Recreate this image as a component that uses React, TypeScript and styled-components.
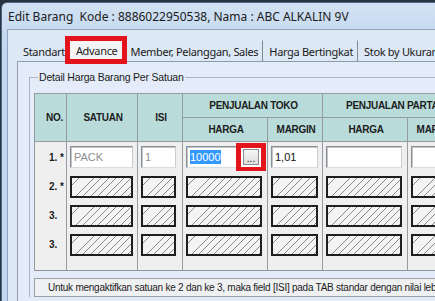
import React from "react";
import styled, { createGlobalStyle } from "styled-components";

const Global = createGlobalStyle`
  html, body { margin: 0; padding: 0; }
  body {
    width: 435px;
    height: 301px;
    overflow: hidden;
    background: #27323f;
    font-family: "Liberation Sans", Arial, sans-serif;
  }
`;

const Window = styled.div`
  margin: 2px 0 0 1px;
  width: 480px;
  height: 320px;
  border: 1px solid #4d6684;
  border-radius: 6px 6px 0 0;
  background: linear-gradient(#d2e2f4, #c3d7ee 40px);
  display: flex;
  flex-direction: column;
`;

const TitleBar = styled.div`
  height: 26px;
  display: flex;
  align-items: center;
  padding-left: 6px;
  font: 12px "Noto Sans", "Liberation Sans", sans-serif;
  color: #1b1b1b;
  white-space: pre;
`;

const Client = styled.div`
  flex: 1;
  margin-left: 5px;
  border: 1px solid #8ea6c4;
  border-right: none;
  border-bottom: none;
  background: #dde8f5;
  padding: 8px 0 0 9px;
  display: flex;
  flex-direction: column;
`;

const TabRow = styled.div`
  display: flex;
  align-items: flex-end;
  height: 23px;
  position: relative;
  z-index: 1;
`;

const Tab = styled.div<{ $active?: boolean }>`
  position: relative;
  height: ${(p) => (p.$active ? "23px" : "20px")};
  margin: 0 0 ${(p) => (p.$active ? "-1px" : "0")} ${(p) => (p.$active ? "-1px" : "0")};
  padding: ${(p) => (p.$active ? "0 6px 0 6px" : "0 4px 0 5px")};
  display: flex;
  align-items: center;
  font: 11px "Noto Sans", "Liberation Sans", sans-serif;
  letter-spacing: -0.32px;
  color: #1b1b1b;
  white-space: nowrap;
  background: ${(p) => (p.$active ? "#f4f4f4" : "transparent")};
  border-left: 1px solid ${(p) => (p.$active ? "#8b97a6" : "transparent")};
  border-right: 1px solid #7f8a96;
  border-top: 1px solid ${(p) => (p.$active ? "#8b97a6" : "transparent")};
`;

const Highlight = styled.span<{ $t: number; $r: number; $b: number; $l: number }>`
  position: absolute;
  top: ${(p) => p.$t}px;
  right: ${(p) => p.$r}px;
  bottom: ${(p) => p.$b}px;
  left: ${(p) => p.$l}px;
  border: 5px solid #e3141c;
  pointer-events: none;
  z-index: 5;
`;

const TabPage = styled.div`
  flex: 1;
  border-top: 1px solid #8e9bab;
  border-left: 1px solid #8e9bab;
  background: #e3ecf8;
  padding: 9px 0 0 11px;
`;

const GroupBox = styled.fieldset`
  margin: 0;
  padding: 10px 0 0 4px;
  border: 1px solid #a9b5c4;
  border-right: none;
  border-bottom: none;
  min-width: 0;
`;

const Legend = styled.legend`
  padding: 0 1px;
  margin-left: 4px;
  font: 10.5px "Liberation Sans", Arial, sans-serif;
  letter-spacing: -0.2px;
  color: #1b1b1b;
`;

const Grid = styled.table`
  border-collapse: collapse;
  table-layout: fixed;
  width: 428px;
  border: 1px solid #8f959b;
`;

const HeadCell = styled.th<{ $pl?: number }>`
  height: 23px;
  padding: 0 0 0 ${(p) => p.$pl ?? 2}px;
  background: #b9dcdb;
  border: 1px solid #969b9f;
  font: bold 10px "Liberation Sans", Arial, sans-serif;
  letter-spacing: -0.3px;
  color: #1c1c1c;
  text-align: center;
  vertical-align: middle;
  white-space: nowrap;
  overflow: hidden;
`;

const BodyCell = styled.td`
  background: #efefef;
  border-left: 1px solid #969b9f;
  border-right: 1px solid #969b9f;
  padding: 5px 0 2px 3px;
  vertical-align: top;
  overflow: hidden;
`;

const RowLabel = styled(BodyCell)`
  padding-left: 14px;
  font: bold 10px "Liberation Sans", Arial, sans-serif;
  line-height: 22px;
  color: #1c1c1c;
  white-space: pre;
`;

const FillerCell = styled.td`
  height: 12px;
  padding: 0;
  background: #efefef;
  border-left: 1px solid #969b9f;
  border-right: 1px solid #969b9f;
`;

const Field = styled.div<{ $w: number; $muted?: boolean }>`
  box-sizing: border-box;
  width: ${(p) => p.$w}px;
  height: 22px;
  margin-top: -1px;
  background: #ffffff;
  border: 1px solid #8a9097;
  border-right-color: #c9ccd1;
  border-bottom-color: #dadcdf;
  box-shadow: inset 1px 1px 0 #c4c4c4;
  display: flex;
  align-items: center;
  justify-content: space-between;
  padding: 0 2px 0 3px;
  font: 11px "Liberation Sans", Arial, sans-serif;
  color: ${(p) => (p.$muted ? "#8e8e8e" : "#111")};
`;

const Selected = styled.span`
  background: #3399ff;
  color: #ffffff;
  padding: 1px 0;
`;

const ButtonWrap = styled.span`
  position: relative;
  display: inline-flex;
`;

const DotsButton = styled.span`
  box-sizing: border-box;
  width: 16px;
  height: 16px;
  border: 1px solid #8c8c8c;
  background: linear-gradient(#f6f6f6, #dedede);
  display: flex;
  align-items: flex-end;
  justify-content: center;
  font: 10px "Liberation Sans", Arial, sans-serif;
  color: #111;
  line-height: 11px;
`;

const Hatch = styled.div<{ $w: number }>`
  box-sizing: border-box;
  width: ${(p) => p.$w}px;
  height: 22px;
  border: 2px solid #1e1e1e;
  background: repeating-linear-gradient(
    135deg,
    #f4f4f4 0 4.6px,
    #8a8a8a 4.6px 5.3px
  );
`;

const NoteBar = styled.div`
  margin-top: 7px;
  height: 19px;
  box-sizing: border-box;
  border: 1px solid #9aa0a6;
  border-right: none;
  background: #eff0f2;
  display: flex;
  align-items: center;
  padding-left: 13px;
  font: 10px "Liberation Sans", Arial, sans-serif;
  letter-spacing: -0.25px;
  color: #1c1c1c;
  white-space: nowrap;
  overflow: hidden;
`;

const widths = [63, 35, 76, 47, 76, 47];
const labels = ["1. *", "2. *", "3.", "3."];

export default function App() {
  return (
    <>
      <Global />
      <Window>
        <TitleBar>Edit Barang  Kode : 8886022950538, Nama : ABC ALKALIN 9V</TitleBar>
        <Client>
          <TabRow>
            <Tab>Standart</Tab>
            <Tab $active>
              Advance
              <Highlight $t={-3} $r={-4} $b={-2} $l={-5} />
            </Tab>
            <Tab>Member, Pelanggan, Sales</Tab>
            <Tab>Harga Bertingkat</Tab>
            <Tab>Stok by Ukuran</Tab>
          </TabRow>
          <TabPage>
            <GroupBox>
              <Legend>Detail Harga Barang Per Satuan</Legend>
              <Grid>
                <colgroup>
                  <col style={{ width: 32 }} />
                  <col style={{ width: 71 }} />
                  <col style={{ width: 45 }} />
                  <col style={{ width: 85 }} />
                  <col style={{ width: 55 }} />
                  <col style={{ width: 85 }} />
                  <col style={{ width: 55 }} />
                </colgroup>
                <thead>
                  <tr>
                    <HeadCell rowSpan={2} $pl={8}>NO.</HeadCell>
                    <HeadCell rowSpan={2}>SATUAN</HeadCell>
                    <HeadCell rowSpan={2}>ISI</HeadCell>
                    <HeadCell colSpan={2}>PENJUALAN TOKO</HeadCell>
                    <HeadCell colSpan={2}>PENJUALAN PARTAI</HeadCell>
                  </tr>
                  <tr>
                    <HeadCell>HARGA</HeadCell>
                    <HeadCell>MARGIN</HeadCell>
                    <HeadCell>HARGA</HeadCell>
                    <HeadCell>MARGIN</HeadCell>
                  </tr>
                </thead>
                <tbody>
                  <tr>
                    <RowLabel>{labels[0]}</RowLabel>
                    <BodyCell>
                      <Field $w={widths[0]} $muted>PACK</Field>
                    </BodyCell>
                    <BodyCell>
                      <Field $w={widths[1]} $muted>1</Field>
                    </BodyCell>
                    <BodyCell>
                      <Field $w={widths[2]}>
                        <Selected>10000</Selected>
                        <ButtonWrap>
                          <DotsButton>...</DotsButton>
                          <Highlight $t={-6} $r={-7} $b={-7} $l={-7} />
                        </ButtonWrap>
                      </Field>
                    </BodyCell>
                    <BodyCell>
                      <Field $w={widths[3]}>1,01</Field>
                    </BodyCell>
                    <BodyCell>
                      <Field $w={widths[4]} />
                    </BodyCell>
                    <BodyCell>
                      <Field $w={widths[5]} />
                    </BodyCell>
                  </tr>
                  {labels.slice(1).map((l, i) => (
                    <tr key={i}>
                      <RowLabel>{l}</RowLabel>
                      {widths.map((w, j) => (
                        <BodyCell key={j}>
                          <Hatch $w={w} />
                        </BodyCell>
                      ))}
                    </tr>
                  ))}
                  <tr>
                    {Array.from({ length: 7 }).map((_, j) => (
                      <FillerCell key={j} />
                    ))}
                  </tr>
                </tbody>
              </Grid>
              <NoteBar>
                Untuk mengaktifkan satuan ke 2 dan ke 3, maka field [ISI] pada TAB standar dengan nilai lebih besar dari 1
              </NoteBar>
            </GroupBox>
          </TabPage>
        </Client>
      </Window>
    </>
  );
}
